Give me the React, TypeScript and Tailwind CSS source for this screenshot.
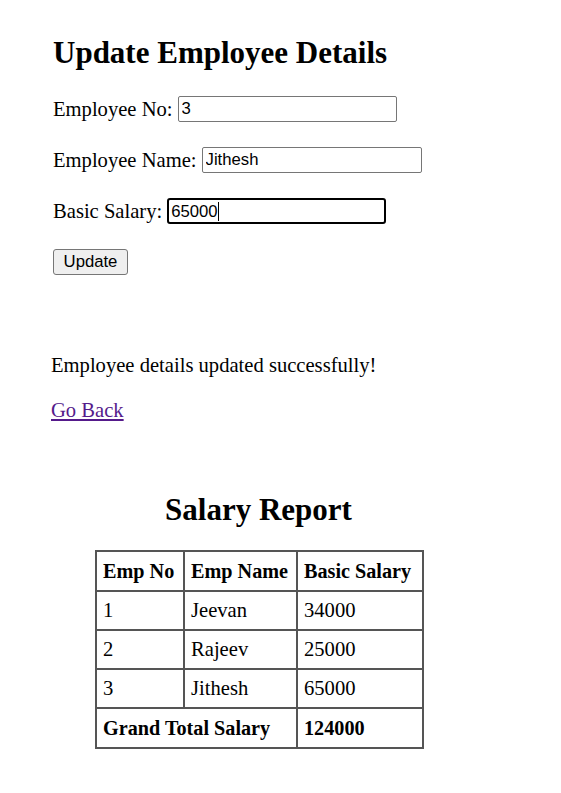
import React from 'react';

const rows = [
  { no: '1', name: 'Jeevan', salary: '34000' },
  { no: '2', name: 'Rajeev', salary: '25000' },
  { no: '3', name: 'Jithesh', salary: '65000' },
];

const App: React.FC = () => {
  return (
    <div className="min-h-screen w-[561px] bg-white text-black font-['Liberation_Serif',serif] text-[20.6px] leading-[23px]">
      {/* update form */}
      <div className="pl-[53px] pt-[36px]">
        <h2 className="text-[31px] leading-[34px] font-bold">Update Employee Details</h2>

        <div className="mt-[26px] flex flex-col gap-[25px]">
          <div className="flex items-center h-[26px]">
            <span>Employee No:</span>
            <input
              defaultValue="3"
              className="ml-[5px] w-[219px] h-[26px] px-[3px] border border-[#767676] rounded-[2px] font-['Liberation_Sans',sans-serif] text-[16.7px] outline-none"
            />
          </div>
          <div className="flex items-center h-[26px]">
            <span>Employee Name:</span>
            <input
              defaultValue="Jithesh"
              className="ml-[5px] w-[220px] h-[26px] px-[3px] border border-[#767676] rounded-[2px] font-['Liberation_Sans',sans-serif] text-[16.7px] outline-none"
            />
          </div>
          <div className="flex items-center h-[26px]">
            <span>Basic Salary:</span>
            <div className="ml-[5px] w-[219px] h-[26px] px-[2px] border-2 border-black rounded-[3px] font-['Liberation_Sans',sans-serif] text-[16.7px] flex items-center">
              <span>65000</span>
              <span className="w-px h-[19px] bg-black" />
            </div>
          </div>
          <div className="flex items-center h-[26px]">
            <button className="w-[75px] h-[26px] bg-[#efefef] border border-[#767676] rounded-[3px] font-['Liberation_Sans',sans-serif] text-[16.7px] leading-none">
              Update
            </button>
          </div>
        </div>
      </div>

      {/* status */}
      <div className="pl-[51px] mt-[79px]">
        <p>Employee details updated successfully!</p>
        <a href="#" className="block mt-[22px] w-fit text-[#551a8b] underline">Go Back</a>
      </div>

      {/* report */}
      <div className="mt-[71px] flex flex-col items-center w-[517px]">
        <h2 className="text-[31px] leading-[34px] font-bold">Salary Report</h2>
      </div>
      <table className="ml-[95px] mt-[23px] border-collapse border-2 border-[#555555] whitespace-nowrap">
        <thead>
          <tr className="h-[40px]">
            <th className="w-[88px] border-2 border-[#555555] px-[6px] text-left font-bold text-[20.2px]">Emp No</th>
            <th className="w-[113px] border-2 border-[#555555] px-[6px] text-left font-bold text-[20.2px]">Emp Name</th>
            <th className="w-[126px] border-2 border-[#555555] px-[6px] text-left font-bold text-[20.2px]">Basic Salary</th>
          </tr>
        </thead>
        <tbody>
          {rows.map((r) => (
            <tr key={r.no} className="h-[39px]">
              <td className="border-2 border-[#555555] px-[6px]">{r.no}</td>
              <td className="border-2 border-[#555555] px-[6px]">{r.name}</td>
              <td className="border-2 border-[#555555] px-[6px]">{r.salary}</td>
            </tr>
          ))}
          <tr className="h-[40px]">
            <td colSpan={2} className="border-2 border-[#555555] px-[6px] font-bold text-[20.2px]">Grand Total Salary</td>
            <td className="border-2 border-[#555555] px-[6px] font-bold text-[20.2px]">124000</td>
          </tr>
        </tbody>
      </table>
    </div>
  );
};

export default App;
